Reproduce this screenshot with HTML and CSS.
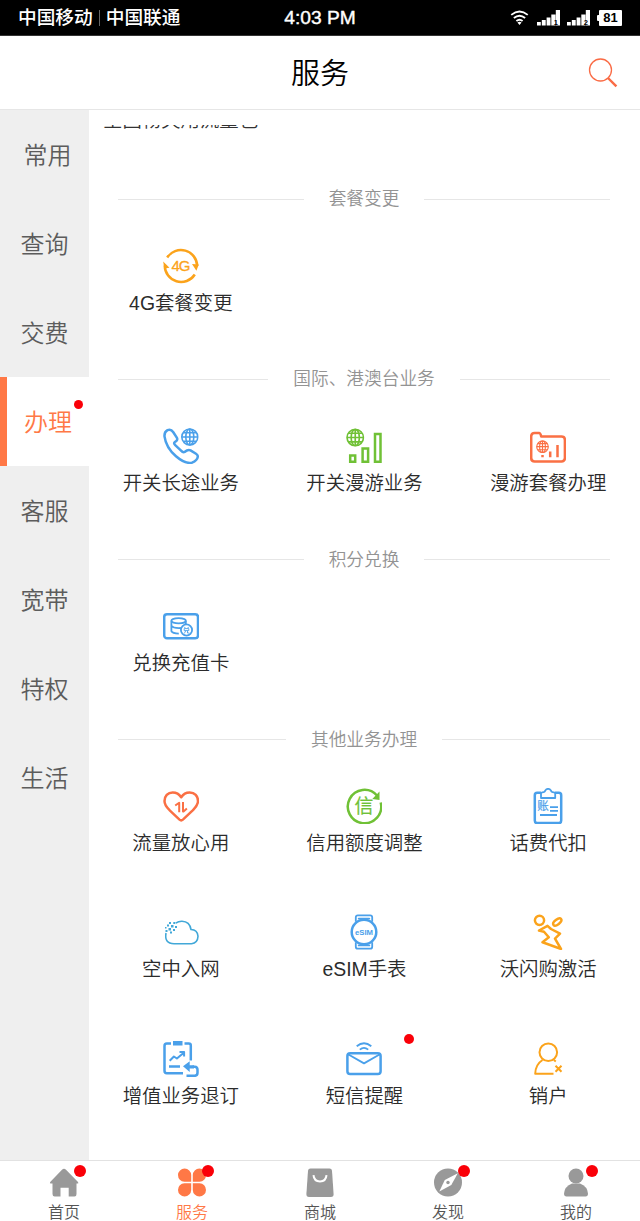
FILE: index.html
```html
<!DOCTYPE html>
<html lang="zh-CN">
<head>
<meta charset="utf-8">
<title>服务</title>
<link rel="stylesheet" href="styles.css">
</head>
<body>
<svg class="defs" width="0" height="0" aria-hidden="true">
  <symbol id="globe" viewBox="0 0 18 18">
    <circle cx="9" cy="9" r="8"/><ellipse cx="9" cy="9" rx="4" ry="8"/><path d="M9 1v16M1 9h16M2.5 4.8h13M2.5 13.2h13"/>
  </symbol>
</svg>
<div class="statusbar">
  <div class="carriers"><span>中国移动</span><i class="divider"></i><span>中国联通</span></div>
  <div class="clock">4:03 PM</div>
  <div class="signals">
    <svg class="wifi" viewBox="0 0 20 16"><path d="M1.2 5.2Q10-2 18.8 5.2M4 8.6q6-5 12 0M6.7 11.7q3.3-2.7 6.6 0" fill="none" stroke="#fff" stroke-width="2"/><path d="M7.8 13.4q2.200-1.600 4.400 0L10 16z" fill="#fff"/></svg>
    <svg class="bars" viewBox="0 0 23 16"><path d="M0 12h3.800v3.500H0zM4.800 10h3.900v5.500H4.800zM9.600 7.500h3.900v8H9.600zM14.300 4.500h4.200v11h-4.200zM18.800 0h4.200v15.500h-4.200z" fill="#fff"/><text x="16.700" y="14.500">1</text></svg>
    <svg class="bars" viewBox="0 0 23 16"><path d="M0 12h3.800v3.500H0zM4.800 10h3.900v5.500H4.800zM9.600 7.500h3.900v8H9.600zM14.300 4.500h4.200v11h-4.200zM18.800 0h4.200v15.500h-4.200z" fill="#fff"/><text x="16.700" y="14.500">2</text></svg>
    <i class="nub"></i><div class="battery">81</div>
  </div>
</div>
<header class="header">
  <h1>服务</h1>
  <svg class="search" viewBox="0 0 30 30" fill="none" stroke="#fa6b45"><circle cx="12.5" cy="12" r="11" stroke-width="1.3"/><path d="M20 20l8.4 8.4" stroke-width="2.4"/></svg>
</header>
<div class="body">
  <nav class="side">
    <a class="side-item first">常用</a>
    <a class="side-item">查询</a>
    <a class="side-item">交费</a>
    <a class="side-item active">办理<i class="dot side-dot"></i></a>
    <a class="side-item">客服</a>
    <a class="side-item">宽带</a>
    <a class="side-item">特权</a>
    <a class="side-item">生活</a>
  </nav>
  <main class="panel">
    <div class="cut"><span>全国畅爽用流量包</span></div>
    <section>
      <h2>套餐变更</h2>
      <div class="grid">
        <div class="item">
          <svg class="icon yellow" viewBox="0 0 36 36"><path d="M4.2 9.5A16.3 16.3 0 0 1 34.2 18M1.8 17.5A16.3 16.3 0 0 0 31.8 26.5"/><path class="fill" d="M.2 13.5l6.3 6.3-5.3.7zM29 16l6.8.5-2.4 6.3z"/><text class="latin" x="18" y="23.4" font-size="15" textLength="19">4G</text></svg>
          <span>4G套餐变更</span>
        </div>
      </div>
    </section>
    <section>
      <h2>国际、港澳台业务</h2>
      <div class="grid">
        <div class="item">
          <svg class="icon blue" viewBox="0 0 36 36"><path d="M10.3 4.2Q8 .8 4.500 2.200 1.200 4 1.500 8.300 3 19.500 13 28.300 21.800 36 29 34.700 34.600 32.300 34.800 28.500 34.800 26.800 33 25.700L27.500 22.400Q25 21.200 21.600 24 20 24.800 17.800 22.400L12.200 17.200Q10.400 15.500 11.800 14 15.300 12 13.800 9.600Z"/><use href="#globe" class="thin" x="17.8" y="0" width="18" height="18"/></svg>
          <span>开关长途业务</span>
        </div>
        <div class="item">
          <svg class="icon green" viewBox="0 0 36 36"><use href="#globe" class="thin" x="0" y=".3" width="18.5" height="18.5"/><path class="heavy" d="M4.200 27.500h5V33.700h-5zM16.600 20.500h5.500v13.200h-5.500zM29 6.100h5.500v27.600h-5.500z"/></svg>
          <span>开关漫游业务</span>
        </div>
        <div class="item">
          <svg class="icon orange" viewBox="0 0 36 36"><path d="M1.2 8.5Q1.2 5 4.5 5H9q1.5 0 2.2 3.5H31.5q3.4 0 3.4 3.5V30q0 3.4-3.4 3.4H4.600q-3.400 0-3.400-3.400z"/><use href="#globe" class="thin" x="6" y="12.2" width="13" height="13"/><path d="M12.5 27v2.2M20.2 23.5v5.7M27.5 17v12.2"/></svg>
          <span>漫游套餐办理</span>
        </div>
      </div>
    </section>
    <section>
      <h2>积分兑换</h2>
      <div class="grid">
        <div class="item">
          <svg class="icon blue" viewBox="0 0 36 36"><rect x="1.2" y="6.2" width="33.8" height="24" rx="2.8"/><g class="mid"><ellipse cx="15.6" cy="12.7" rx="7.2" ry="2.6"/><path d="M8.4 12.7v10.5q1 2.3 7.4 2.4M22.8 12.7v3.5M8.4 17.8q1.8 2.6 9.5 2.2"/><circle cx="23.5" cy="22" r="5.6"/><path d="M21.3 18.8l1 1.3M25.7 18.8l-1 1.3M21.2 20.6h4.6v2h-4.6zM22.5 22.7q0 2-1.4 2.5M24.5 22.7v2.3h1.8" stroke-width=".9"/></g></svg>
          <span>兑换充值卡</span>
        </div>
      </div>
    </section>
    <section>
      <h2>其他业务办理</h2>
      <div class="grid">
        <div class="item">
          <svg class="icon orange" viewBox="0 0 36 36"><path d="M18.2 9.3C15.5 4.9 12.4 4.4 9.7 4.4 4.7 4.4 1.5 8.2 1.5 13c0 4.3 2.6 6.6 5.2 9.3L16.500 31.600q1.700 1.500 3.400 0L29.700 22.300C32.300 19.600 35 17.300 35 13c0-4.800-3.300-8.600-8.300-8.600-2.700 0-5.800.5-8.500 4.900z"/><path d="M12.200 17.500l4-2.800v9.500M20 14v9.500h.5l3.400-3" stroke-width="2"/></svg>
          <span>流量放心用</span>
        </div>
        <div class="item">
          <svg class="icon green" viewBox="0 0 36 36"><path d="M31 7.5A16.7 16.7 0 1 0 34.7 14.5"/><path class="fill" d="M33.500 3.500v8.400l-7.200-.8z"/><text class="hanzi" x="18" y="25" font-size="19">信</text></svg>
          <span>信用额度调整</span>
        </div>
        <div class="item">
          <svg class="icon blue" viewBox="0 0 36 36"><path d="M11 4.800H7.200q-2.400 0-2.400 2.400v25.400q0 2.500 2.400 2.500h21.600q2.400 0 2.400-2.500V7.200q0-2.400-2.400-2.400H25"/><path class="mid" d="M11 10V5.500q0-1 1.200-1.200 2.800 0 3-1.800 2.900-3.300 5.800 0 .2 1.800 3 1.800 1.200.2 1.200 1.200V10z"/><text class="hanzi" x="13" y="22.300" font-size="11.500">账</text><path class="mid" d="M20 19.200h8M20 22.800h8M10 27h17"/></svg>
          <span>话费代扣</span>
        </div>
        <div class="item">
          <svg class="icon sky" viewBox="0 0 36 36"><path d="M3 19Q1.200 29.700 11 29.800H28.500Q34.700 29 35 22.300 34.500 15.500 28 15.500 26.700 7.500 19 7.300 15.500 7.200 12.800 9.200" stroke-width="1.600"/><path class="fill" d="M6 8h2v2H6zM10.300 8h2v2h-2zM4 10.500h2v2H4zM8 11h2.500v2.500H8zM12 12h2v2h-2zM2 13h1.500v1.500H2zM5.500 14h2.500v2.500H5.500zM10 15h2v2h-2zM2.500 16h2v2h-2zM7 17.500h2v2H7z"/></svg>
          <span>空中入网</span>
        </div>
        <div class="item">
          <svg class="icon blue" viewBox="0 0 36 36"><circle cx="18" cy="18" r="12.300"/><path class="mid" d="M9.800 7.700V3.300q0-2 2-2h12.400q2 0 2 2v4.400M12.700 5.300V4.600h10.600v.7M9.800 28.300v4.400q0 2 2 2h12.400q2 0 2-2v-4.400M12.700 30.700v.7h10.600v-.7"/><text x="18" y="20.800" font-size="7.700" font-weight="700" textLength="18">eSIM</text></svg>
          <span>eSIM手表</span>
        </div>
        <div class="item">
          <svg class="icon yellow" viewBox="0 0 36 36"><circle cx="9.500" cy="6.300" r="4.600"/><ellipse cx="27.300" cy="8" rx="4.800" ry="2.400" transform="rotate(-38 27.300 8)"/><path d="M9 16.500L17.500 11.800 21 15l9 4.700-5 5L31 35 12.500 28.300l6.300-5-4.800-5.500z"/></svg>
          <span>沃闪购激活</span>
        </div>
        <div class="item">
          <svg class="icon blue" viewBox="0 0 36 36"><path d="M8 2.500H3.800Q1.500 2.500 1.500 5v24.800q0 2.500 2.300 2.500H20M21.500 2.500h4.300q2 0 2 2v15M6 25.600h11M29.500 25.800h2.200q2.800.2 2.800 3v3q0 2.900-2.800 3h-8.200"/><path class="fill" d="M10 0h9.500v4.400H10zM20 25.200l6.700-4.900v3.900H31v3.200h-4.300v3.700z"/><path d="M6.700 19.700l4.200-4.200 3 2 7.200-6M16.500 10.900h4.600v4.700" stroke-width="2"/></svg>
          <span>增值业务退订</span>
        </div>
        <div class="item">
          <svg class="icon blue" viewBox="0 0 36 36"><rect x="1.400" y="12.200" width="33.200" height="20.800" rx="2.800"/><path class="mid" d="M2.500 13.500L18 22.400l15.500-8.900M10.700 5.200q7.300-6 14.600 0M13.800 8.600q4.200-3.500 8.400 0"/></svg>
          <i class="dot item-dot"></i>
          <span>短信提醒</span>
        </div>
        <div class="item">
          <svg class="icon yellow" viewBox="0 0 36 36"><g stroke-width="2"><circle cx="18.300" cy="11.300" r="8.800"/><path d="M12.500 19Q5.500 23.500 5.200 32.700H23.500M23.800 19l2 1.500M25.500 24.800l6 6M31.500 24.800l-6 6"/></g></svg>
          <span>销户</span>
        </div>
      </div>
    </section>
  </main>
</div>
<footer class="tabs">
  <a class="tab"><svg viewBox="0 0 30 30"><path d="M15 .8q1 0 2 1L29 14q1 1.500-.5 1.500h-1V26q0 2.500-2 2.500h-5.800v-8.800h-8.200v8.800H5.700q-2.200 0-2.200-2.500V15.500H2Q.2 15.500 1.200 14L13 1.800q1-1 2-1z"/></svg><span>首页</span><i class="dot tab-dot"></i></a>
  <a class="tab on"><svg viewBox="0 0 30 30"><path d="M14.2 13.700H7.400A6.600 6.600 0 1 1 14.200 7zM15.800 13.700V7a6.600 6.600 0 1 1 6.800 6.700zM14.200 15.300v6.700a6.600 6.600 0 1 1-6.800-6.700zM15.800 15.300h6.800a6.600 6.600 0 1 1-6.800 6.700z"/></svg><span>服务</span><i class="dot tab-dot"></i></a>
  <a class="tab"><svg viewBox="0 0 30 30"><path d="M5.500.5h19q2.300 0 2.500 2.300L28.600 26q.2 3-2.700 3H4.100q-2.900 0-2.700-3L3 2.800Q3.200.5 5.500.5z"/><path d="M8.500 7.200Q9 13.500 15 13.500T21.500 7.200" fill="none" stroke="#fff" stroke-width="2"/></svg><span>商城</span></a>
  <a class="tab"><svg viewBox="0 0 30 30"><circle cx="15" cy="14.500" r="14"/><path d="M24.800 5.200L18.300 17 6.300 23.500 11.800 12z" fill="#fff"/><circle cx="15" cy="14.500" r="1.700"/></svg><span>发现</span><i class="dot tab-dot"></i></a>
  <a class="tab"><svg viewBox="0 0 30 30"><circle cx="15" cy="8" r="7.500"/><path d="M11 15.500h8q7.500 3 8 10 0 3-2.500 3h-19q-2.500 0-2.500-3 .5-7 8-10z"/></svg><span>我的</span><i class="dot tab-dot"></i></a>
</footer>
</body>
</html>
```
FILE: styles.css
```css
* { box-sizing: border-box; }
html, body { margin: 0; height: 1221px; overflow: hidden; }
body {
  width: 640px;
  display: flex;
  flex-direction: column;
  background: #fff;
  color: #333;
  font-family: "Liberation Sans", "Noto Sans CJK SC", sans-serif;
  font-weight: 350;
}
i { font-style: normal; }
.defs { display: none; }

.statusbar {
  flex: none;
  height: 36px;
  padding: 0 18px;
  background: #000;
  color: #fff;
  display: grid;
  grid-template-columns: 1fr auto 1fr;
  align-items: center;
  border-bottom: 1px solid #333;
}
.carriers { display: flex; align-items: center; font-size: 18.7px; font-weight: 500; line-height: 24px; }
.divider { width: 1px; height: 16px; margin: 0 6px; background: #666; }
.clock { font-size: 19.2px; line-height: 24px; -webkit-text-stroke: .4px #fff; }
.signals { display: flex; justify-content: flex-end; align-items: center; }
.wifi { width: 19px; height: 15px; margin-right: 8px; }
.bars { width: 23px; height: 16px; margin-right: 7px; }
.bars text { font-size: 7.5px; font-weight: 700; fill: #000; }
.nub { width: 2px; height: 6px; border-radius: 1px 0 0 1px; background: #fff; }
.battery {
  width: 23px;
  height: 16px;
  border-radius: 1px;
  background: #fff;
  color: #000;
  font-size: 13px;
  font-weight: 700;
  line-height: 16px;
  text-align: center;
}

.header {
  flex: none;
  height: 74px;
  padding: 2px 22px 0;
  display: grid;
  grid-template-columns: 1fr auto 1fr;
  align-items: center;
  border-bottom: 1px solid #e6e6e6;
}
.header h1 { grid-column: 2; margin: 0; font-size: 29px; line-height: 40px; font-weight: 350; color: #000; }
.search { justify-self: end; width: 30px; height: 30px; margin-bottom: 2px; }

.body { flex: 1; min-height: 0; display: flex; }
.side { width: 89px; flex: none; background: #efefef; }
.side-item {
  position: relative;
  height: 89px;
  padding-bottom: 2px;
  display: flex;
  align-items: center;
  justify-content: center;
  font-size: 24px;
  color: #5c5c5c;
}
.side-item.first { padding-left: 6px; }
.side-item.active { background: #fff; color: #ff7846; border-left: 7px solid #ff7846; }

.dot { position: absolute; border-radius: 50%; background: #fa0008; }
.side-dot { width: 9px; height: 9px; right: 6px; top: 23px; }
.item-dot { width: 10px; height: 10px; left: calc(50% + 39.5px); top: 15px; }
.tab-dot { width: 12px; height: 12px; left: calc(50% + 10px); top: 4px; }

.panel { flex: 1; margin-top: 15px; overflow: hidden; }
.cut { display: flow-root; height: 47px; padding-left: 14px; font-size: 19.4px; line-height: 24px; }
.cut span { display: block; margin-top: -17px; }
h2 {
  margin: 0;
  height: 53.8px;
  padding: 1px 30px 0 29px;
  display: flex;
  align-items: center;
  gap: 25px;
  font-size: 17.7px;
  font-weight: 350;
  line-height: 24px;
  color: #939393;
}
h2::before, h2::after { content: ""; flex: 1; height: 1px; background: #e6e6e6; }
.grid { display: grid; grid-template-columns: repeat(3, 1fr); grid-auto-rows: 126.3px; }
.item {
  position: relative;
  padding-top: 22px;
  display: flex;
  flex-direction: column;
  align-items: center;
  font-size: 19.4px;
  color: #2b2b2b;
}
.item span { margin-top: 7px; line-height: 24px; white-space: nowrap; }

.icon { width: 36px; height: 36px; fill: none; stroke: currentColor; stroke-width: 2.5; stroke-linejoin: round; }
.icon .heavy { stroke-width: 2.5; stroke-linejoin: miter; }
.icon .mid { stroke-width: 1.8; }
.icon .thin { stroke-width: 1.6; }
.icon .fill { fill: currentColor; stroke: none; }
.icon text { fill: currentColor; stroke: none; text-anchor: middle; }
.icon text.latin { stroke: currentColor; stroke-width: .3; }
.icon text.hanzi { font-weight: 400; stroke: currentColor; stroke-width: .2; }
.blue { color: #4aa0ea; }
.green { color: #70c136; }
.orange { color: #fa7044; }
.yellow { color: #fba31b; }
.sky { color: #42a8d8; }

.tabs {
  flex: none;
  height: 61px;
  display: grid;
  grid-template-columns: repeat(5, 1fr);
  border-top: 1px solid #e2e2e2;
}
.tab {
  position: relative;
  padding-top: 7px;
  display: flex;
  flex-direction: column;
  align-items: center;
  font-size: 16px;
  line-height: 20px;
  color: #555;
}
.tab svg { width: 30px; height: 30px; fill: #999; }
.tab span { margin-top: 5px; }
.tab.on { color: #ff7846; }
.tab.on svg { fill: #ff7846; }
```
